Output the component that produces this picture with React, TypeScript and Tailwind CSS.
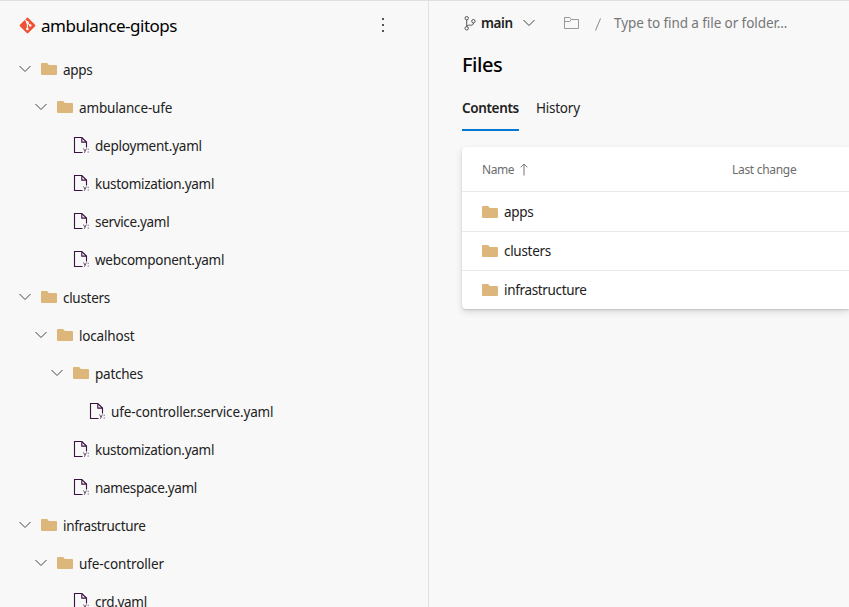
type Node = { name: string; depth: number; file?: boolean; tracking: string };

const tree: Node[] = [
  { name: "apps", depth: 0, tracking: "tracking-[-0.3px]" },
  { name: "ambulance-ufe", depth: 1, tracking: "tracking-[-0.16px]" },
  { name: "deployment.yaml", depth: 2, file: true, tracking: "tracking-[-0.22px]" },
  { name: "kustomization.yaml", depth: 2, file: true, tracking: "tracking-[-0.28px]" },
  { name: "service.yaml", depth: 2, file: true, tracking: "tracking-[-0.33px]" },
  { name: "webcomponent.yaml", depth: 2, file: true, tracking: "tracking-[-0.26px]" },
  { name: "clusters", depth: 0, tracking: "tracking-[-0.3px]" },
  { name: "localhost", depth: 1, tracking: "tracking-[-0.18px]" },
  { name: "patches", depth: 2, tracking: "tracking-[-0.25px]" },
  { name: "ufe-controller.service.yaml", depth: 3, file: true, tracking: "tracking-[-0.14px]" },
  { name: "kustomization.yaml", depth: 2, file: true, tracking: "tracking-[-0.28px]" },
  { name: "namespace.yaml", depth: 2, file: true, tracking: "tracking-[-0.34px]" },
  { name: "infrastructure", depth: 0, tracking: "tracking-[-0.34px]" },
  { name: "ufe-controller", depth: 1, tracking: "tracking-[-0.11px]" },
  { name: "crd.yaml", depth: 2, file: true, tracking: "tracking-[-0.3px]" },
];

const indent = ["pl-[19px]", "pl-[35px]", "pl-[51px]", "pl-[67px]"];

function Chevron() {
  return (
    <svg width="12" height="12" viewBox="0 0 12 12" fill="none" stroke="#444" className="shrink-0">
      <path d="M.5 3 6 8.5 11.5 3" />
    </svg>
  );
}

function Folder() {
  return (
    <svg width="16" height="12" viewBox="0 0 16 12" fill="#dcb67a" className="shrink-0">
      <path d="M1 0h5.2l1.6 1.9H15a1 1 0 0 1 1 1V11a1 1 0 0 1-1 1H1a1 1 0 0 1-1-1V1a1 1 0 0 1 1-1Z" />
    </svg>
  );
}

function YamlFile() {
  return (
    <svg width="16" height="17" viewBox="0 0 16 17" fill="none" className="shrink-0">
      <path d="M9.5 15.5h-8V.5h7.3l4.7 4.6v5.4M8.8.5v4.6h4.7" stroke="#3a1242" strokeWidth="1.1" />
      <path d="m10.5 11.5 1.4 2.6m1.5-2.6-2.1 4.3" stroke="#55405c" strokeWidth=".9" />
      <path d="M14.7 11.8h1v1h-1zM14.7 14.4h1v1h-1z" fill="#55405c" />
    </svg>
  );
}

function GitLogo() {
  return (
    <svg width="17" height="17" viewBox="0 0 24 24" className="mb-0.5 shrink-0">
      <rect x="3.7" y="3.7" width="16.6" height="16.6" rx="1.5" transform="rotate(45 12 12)" fill="#f05133" />
      <path d="m8.4 3.6 3.4 3.7v9.2M12 7.8l3.7 3.9" stroke="#f8f8f8" strokeWidth="1.6" fill="none" />
      <g fill="#f8f8f8">
        <circle cx="11.8" cy="7.6" r="1.8" />
        <circle cx="15.9" cy="12" r="1.8" />
        <circle cx="11.8" cy="16.8" r="1.8" />
      </g>
    </svg>
  );
}

function Branch() {
  return (
    <svg width="12" height="15" viewBox="0 0 12 15" fill="none" stroke="#555" className="shrink-0">
      <circle cx="2.7" cy="2.2" r="1.7" />
      <circle cx="2.7" cy="12.3" r="1.7" />
      <circle cx="9.4" cy="5.2" r="1.7" />
      <path d="M2.7 3.9v6.7M9.4 6.9c0 1.8-1 2.3-2.5 2.3H5.2c-1.4 0-2.5.4-2.5 1.4" />
    </svg>
  );
}

export default function App() {
  return (
    <div className="flex h-[607px] w-full overflow-hidden border-t border-[#e0e0e0] bg-[#f8f8f8] font-['Noto_Sans','Open_Sans',sans-serif] text-[13.5px] leading-5 text-[#212121]">
      <aside className="flex w-[429px] shrink-0 flex-col border-r border-[#e0e0e0]">
        <header className="flex h-[50px] shrink-0 items-center pr-[43px] pl-[18.5px]">
          <GitLogo />
          <h1 className="ml-[5.5px] flex-1 text-[17px] tracking-[-0.5px] text-black">ambulance-gitops</h1>
          <svg width="4" height="16" viewBox="0 0 4 16" fill="#555" className="mb-0.5">
            <path d="M1 1h2v2H1zM1 7h2v2H1zM1 13h2v2H1z" />
          </svg>
        </header>
        <ul>
          {tree.map((n, i) => (
            <li key={i} className={`flex h-[38px] items-center ${indent[n.depth]}`}>
              {n.file ? (
                <span className="flex w-11 shrink-0 pb-0.5 pl-[22px]"><YamlFile /></span>
              ) : (
                <span className="flex w-11 shrink-0 items-center gap-2.5 pb-0.5"><Chevron /><Folder /></span>
              )}
              <span className={`whitespace-nowrap ${n.tracking}`}>{n.name}</span>
            </li>
          ))}
        </ul>
      </aside>
      <main className="flex min-w-0 flex-1 flex-col pl-[33px]">
        <div className="flex h-11 shrink-0 items-center pl-0.5">
          <Branch />
          <span className="ml-[5px] w-[42px] font-semibold tracking-[-0.4px]">main</span>
          <Chevron />
          <svg width="15" height="12" viewBox="0 0 15 12" fill="none" stroke="#999" className="ml-[29px]">
            <path d="M.5 11.5V.5h5.3l1.5 2h7.2v9zM.5 4.5h5.3l1.5-2" />
          </svg>
          <svg width="6" height="13" viewBox="0 0 6 13" fill="none" stroke="#888" className="mt-0.5 ml-4">
            <path d="M5.5.5.5 12.5" />
          </svg>
          <span className="ml-[13px] tracking-[-0.08px] text-[#767676]">Type to find a file or folder...</span>
        </div>
        <h2 className="h-10 text-xl leading-[40px] font-medium tracking-[-0.45px] text-black">Files</h2>
        <nav className="flex h-[46px] gap-[17px] leading-[46px]">
          <span className="w-[57px] border-b-2 border-[#0078d4] font-semibold tracking-[-0.36px]">Contents</span>
          <span className="tracking-[-0.24px]">History</span>
        </nav>
        <section className="mt-4 h-[162px] shrink-0 rounded-l bg-white shadow-[0_3px_7px_rgba(0,0,0,0.13),0_1px_2px_rgba(0,0,0,0.14)]">
          <div className="flex h-[45px] items-center border-b border-[#eaeaea] pl-5 text-xs text-[#6c6c6c]">
            <span className="w-[38px] pt-0.5 tracking-[-0.4px]">Name</span>
            <svg width="8" height="13" viewBox="0 0 8 13" fill="none" stroke="#777">
              <path d="M4 12.5V1M.7 4.3 4 1l3.3 3.3" />
            </svg>
            <span className="ml-[204px] pt-0.5 tracking-[-0.3px]">Last change</span>
          </div>
          <div className="flex h-10 items-center gap-1.5 border-b border-[#eaeaea] pl-5">
            <Folder />
            <span className="tracking-[-0.3px]">apps</span>
          </div>
          <div className="flex h-[39px] items-center gap-1.5 border-b border-[#eaeaea] pl-5">
            <Folder />
            <span className="tracking-[-0.3px]">clusters</span>
          </div>
          <div className="flex h-[38px] items-center gap-1.5 pl-5">
            <Folder />
            <span className="tracking-[-0.34px]">infrastructure</span>
          </div>
        </section>
      </main>
    </div>
  );
}
